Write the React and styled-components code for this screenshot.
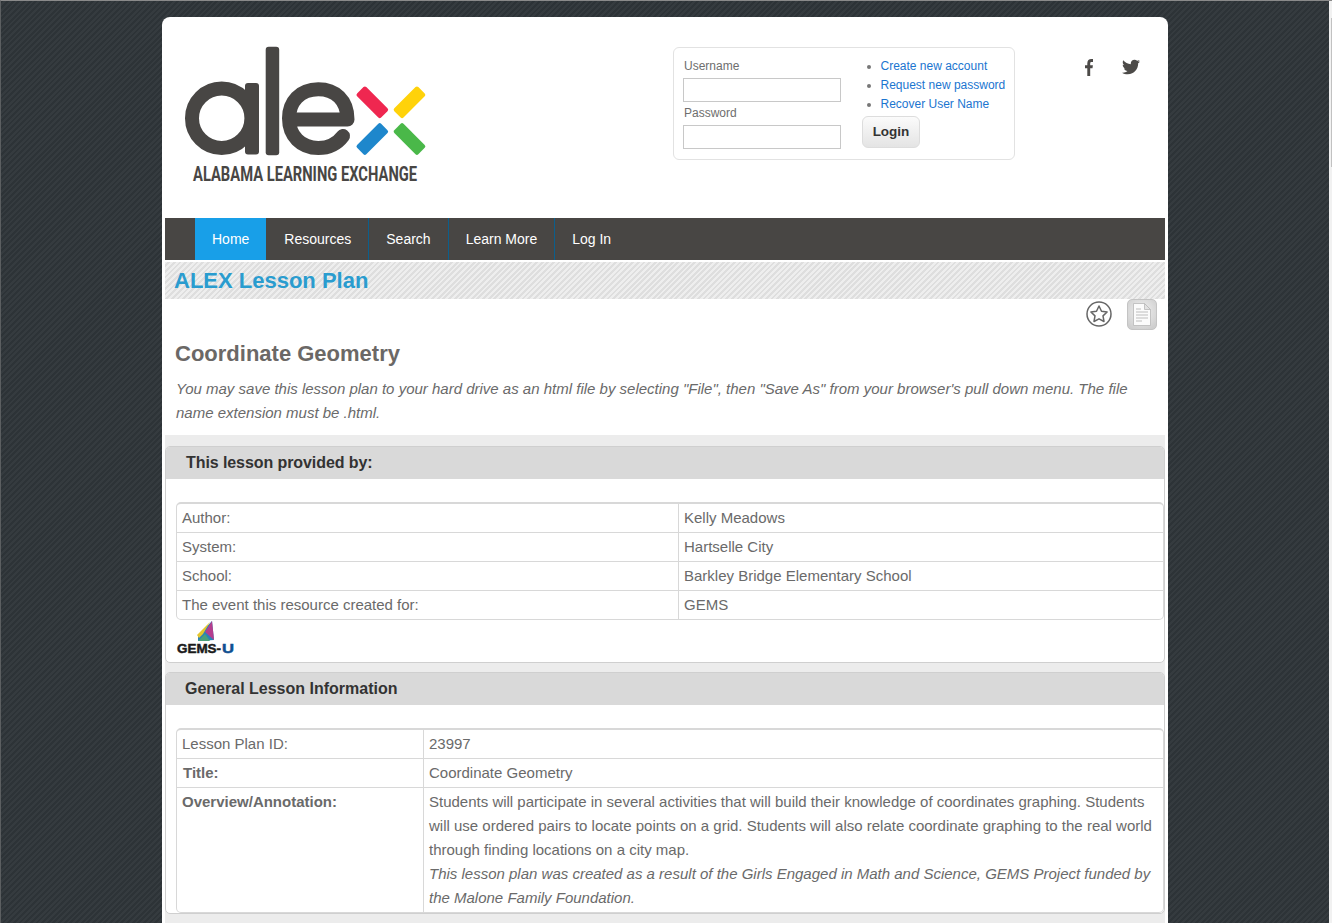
import React from 'react';
import styled, { createGlobalStyle } from 'styled-components';
import { FaTwitter } from 'react-icons/fa';

const Global = createGlobalStyle`
  html, body { margin: 0; padding: 0; height: 100%; overflow: hidden; }
  body { font-family: "Liberation Sans", Arial, sans-serif; color: #666; }
`;

const Backdrop = styled.div`
  position: relative;
  box-sizing: border-box;
  height: 923px;
  overflow: hidden;
  border-top: 1px solid #8a8a8a;
  border-left: 1px solid #5c5f61;
  padding: 16px 164px 0 161px;
  background: repeating-linear-gradient(135deg, #2d3337 0 2px, #353b3f 2px 4px);
`;
const ScrollTrack = styled.div`
  position: absolute;
  top: 0;
  right: 0;
  bottom: 0;
  width: 3px;
  background: #f1f1f1;
`;
const ScrollThumb = styled.div`
  position: absolute;
  top: 17px;
  right: 0;
  width: 1px;
  height: 149px;
  background: #c1c1c1;
`;
const Page = styled.div`
  background: #fff;
  border-radius: 8px 8px 0 0;
  padding: 0 3px;
  min-height: 1000px;
`;
const Header = styled.header`
  height: 201px;
  display: flex;
  align-items: flex-start;
`;
const LogoBox = styled.a`
  display: block;
  width: 250px;
  height: 150px;
  margin: 23px 0 0 15px;
`;
const LoginBox = styled.form`
  box-sizing: border-box;
  width: 342px;
  height: 113px;
  margin: 30px 0 0 243px;
  border: 1px solid #e2e2e2;
  border-radius: 6px;
  padding: 10px 9px;
  display: flex;
  font-size: 12px;
`;
const Fields = styled.div`
  width: 158px;
  margin-right: 21px;
`;
const FieldLabel = styled.label`
  display: block;
  height: 14px;
  line-height: 14px;
  margin: 1px 0 5px 1px;
  color: #6e6e6e;
`;
const TextInput = styled.input`
  box-sizing: border-box;
  display: block;
  width: 158px;
  height: 24px;
  border: 1px solid #c8c8c8;
  margin-bottom: 4px;
  background: #fff;
`;
const Side = styled.div`
  display: flex;
  flex-direction: column;
  align-items: flex-start;
`;
const LinkList = styled.ul`
  margin: -1px 0 0;
  padding: 0 0 0 18.5px;
  list-style: disc;
  color: #777;
  li { height: 19px; line-height: 19px; white-space: nowrap; }
`;
const TextLink = styled.a`
  color: #1b75d0;
`;
const LoginButton = styled.button`
  margin: 2px 0 0 0;
  width: 58px;
  height: 32px;
  border: 1px solid #ddd;
  border-radius: 6px;
  background: linear-gradient(#fbfbfb, #e4e4e4);
  font: bold 13.5px "Liberation Sans", sans-serif;
  color: #333;
  padding: 0 0 2px;
`;
const Social = styled.div`
  display: flex;
  align-items: center;
  gap: 29px;
  margin: 41px 0 0 70px;
  color: #4c4a48;
`;
const Nav = styled.nav`
  height: 42px;
  background: #484644;
  display: flex;
  padding-left: 30px;
  margin-bottom: 2px;
`;
const NavItem = styled.a`
  display: flex;
  align-items: center;
  padding: 0 17px;
  font-size: 14px;
  color: #fff;
  background: ${p => (p.$active ? '#189fe8' : 'transparent')};
  border-right: ${p => (p.$last || p.$active ? '0' : '1px solid #0c5f8c')};
  margin-left: ${p => (p.$first ? '1px' : '0')};
`;
const Band = styled.div`
  height: 37px;
  display: flex;
  align-items: center;
  padding-left: 9px;
  background: repeating-linear-gradient(135deg, #eeeeee 0 2px, #dedede 2px 4px);
`;
const BandTitle = styled.h2`
  margin: 0;
  font-size: 22px;
  font-weight: bold;
  color: #2a9ccf;
  line-height: 37px;
`;
const Tools = styled.div`
  height: 32px;
  display: flex;
  justify-content: flex-end;
  align-items: flex-start;
  gap: 15px;
  padding-right: 8px;
`;
const StarBadge = styled.span`
  display: block;
  width: 26px;
  height: 26px;
  margin-top: 2px;
`;
const DocButton = styled.span`
  box-sizing: border-box;
  width: 30px;
  height: 31px;
  border: 1px solid #c4c4c4;
  border-radius: 5px;
  background: radial-gradient(circle at 50% 40%, #f2f2f2, #cfcfcf 85%);
  display: flex;
  align-items: center;
  justify-content: center;
`;
const Intro = styled.div`
  padding: 10px 10px 10px;
`;
const PlanTitle = styled.h1`
  margin: 0 0 10px;
  font-size: 22px;
  line-height: 26px;
  font-weight: bold;
  color: #6b6866;
`;
const Note = styled.p`
  margin: 0 0 0 1px;
  font-size: 15px;
  line-height: 24px;
  font-style: italic;
  color: #6a6a6a;
`;
const Sections = styled.div`
  background: #ececec;
  padding: 11px 0 20px;
  display: flex;
  flex-direction: column;
  gap: 9px;
`;
const Panel = styled.section`
  background: #fff;
  border: 1px solid #cfcfcf;
  border-radius: 5px;
`;
const PanelHead = styled.h3`
  margin: 0;
  height: 32px;
  line-height: 31px;
  background: #d9d9d9;
  border-radius: 4px 4px 0 0;
  padding-left: ${p => p.$indent}px;
  font-size: 16px;
  font-weight: bold;
  color: #333;
  letter-spacing: ${p => p.$tight || 0}px;
`;
const PanelBody = styled.div`
  padding: 23px 0 0 10px;
`;
const InfoTable = styled.table`
  width: 988px;
  table-layout: fixed;
  border-collapse: separate;
  border-spacing: 0;
  border: 1px solid #d8d8d8;
  border-top-width: 2px;
  border-radius: 5px;
  font-size: 15px;
  line-height: 24px;
  color: #6a6a6a;
`;
const Cell = styled.td`
  padding: 2px 5px;
  vertical-align: top;
  border-bottom: ${p => (p.$end ? '0' : '1px solid #d8d8d8')};
  border-left: ${p => (p.$second ? '1px solid #d8d8d8' : '0')};
  font-weight: ${p => (p.$bold ? 'bold' : 'normal')};
  padding-left: ${p => (p.$nudge ? '6px' : '5px')};
`;
const GemsMark = styled.div`
  display: block;
  height: 42px;
`;

const Logo = () => (
  <svg width="250" height="150" viewBox="180 40 250 150">
    <g fill="none" stroke="#484644" strokeWidth="14">
      <circle cx="221.7" cy="118.3" r="29.7" />
      <path d="M293 119.5H347.5C347.5 100 335 89.3 318.3 89.3C300 89.3 289 102 289 118.3C289 136 301 148 318.3 148C329 148 337 144 343 136" strokeLinecap="round" strokeLinejoin="round" />
    </g>
    <rect x="245" y="83" width="14" height="71.5" rx="3" fill="#484644" />
    <rect x="265.7" y="46.7" width="13.5" height="108.5" rx="3" fill="#484644" />
    <rect x="355.3" y="95.8" width="34" height="13" rx="2" fill="#ef2750" transform="rotate(45 372.3 102.3)" />
    <rect x="392.5" y="95.8" width="34" height="13" rx="2" fill="#ffd20a" transform="rotate(-45 409.5 102.3)" />
    <rect x="355.3" y="132.5" width="34" height="13" rx="2" fill="#1e87cc" transform="rotate(-45 372.3 139)" />
    <rect x="392.5" y="132.5" width="34" height="13" rx="2" fill="#4ab849" transform="rotate(45 409.5 139)" />
    <text transform="translate(193 180.7) scale(.77 1)" fontFamily="Roboto, sans-serif" fontWeight="700" fontSize="19.7" fill="#484644" textLength="291" lengthAdjust="spacingAndGlyphs">ALABAMA LEARNING EXCHANGE</text>
  </svg>
);

const FacebookF = () => (
  <svg width="8" height="17" viewBox="0 0 8 17" fill="currentColor">
    <path d="M2.3 17V9.3H0V6.3h2.3V4.2C2.3 1.5 3.9 0 6.3 0H8v3H6.6C5.5 3 5.2 3.5 5.2 4.5v1.8h2.7l-.4 3H5.2V17z" />
  </svg>
);

const Star = () => (
  <svg width="26" height="26" viewBox="0 0 26 26" fill="none" stroke="#666" strokeWidth="1.5">
    <circle cx="13" cy="13" r="12" />
    <path d="M13 5l2.5 5.2 5.6.8-4.1 3.9 1 5.6-5-2.7-5 2.7 1-5.6-4.1-3.9 5.6-.8z" strokeLinejoin="round" />
  </svg>
);

const Doc = () => (
  <svg width="20" height="25" viewBox="0 0 20 25">
    <path d="M1.5 1.5h11l6 6v16h-17z" fill="#fbfbfb" stroke="#b8b8b8" strokeWidth=".8" />
    <path d="M12.5 1.5v6h6z" fill="#e2e2e2" stroke="#b8b8b8" strokeWidth=".8" />
    <path d="M4 7h5M4 10h12M4 13h12M4 16h12M4 19h6" stroke="#bdbdbd" strokeWidth="1" />
  </svg>
);

const Gems = () => (
  <svg width="60" height="36" viewBox="176 620 60 36">
    <polygon points="198,636 212,621 214,640 198,641" fill="#2a83b8" />
    <polygon points="197,635 210,622 203,634 199,638" fill="#e6c62c" />
    <polygon points="212,621 214,640 205,632" fill="#b53d8e" />
    <polygon points="198,641 205,634 210,641" fill="#4aa07a" />
    <text x="177" y="653" fontFamily="'Liberation Sans', sans-serif" fontWeight="bold" fontSize="13.5" textLength="44" lengthAdjust="spacingAndGlyphs" fill="#1b1b1b" stroke="#1b1b1b" strokeWidth=".5">GEMS-</text>
    <text x="222" y="653" fontFamily="'Liberation Sans', sans-serif" fontWeight="bold" fontSize="13.5" textLength="12" lengthAdjust="spacingAndGlyphs" fill="#0f4f91" stroke="#0f4f91" strokeWidth=".5">U</text>
  </svg>
);

const providerRows = [
  ['Author:', 'Kelly Meadows'],
  ['System:', 'Hartselle City'],
  ['School:', 'Barkley Bridge Elementary School'],
  ['The event this resource created for:', 'GEMS'],
];

export default function App() {
  return (
    <>
      <Global />
      <Backdrop>
        <Page>
          <Header>
            <LogoBox><Logo /></LogoBox>
            <LoginBox>
              <Fields>
                <FieldLabel>Username</FieldLabel>
                <TextInput />
                <FieldLabel>Password</FieldLabel>
                <TextInput />
              </Fields>
              <Side>
                <LinkList>
                  <li><TextLink>Create new account</TextLink></li>
                  <li><TextLink>Request new password</TextLink></li>
                  <li><TextLink>Recover User Name</TextLink></li>
                </LinkList>
                <LoginButton type="button">Login</LoginButton>
              </Side>
            </LoginBox>
            <Social>
              <FacebookF />
              <FaTwitter size={18} />
            </Social>
          </Header>
          <Nav>
            <NavItem $active>Home</NavItem>
            <NavItem $first>Resources</NavItem>
            <NavItem>Search</NavItem>
            <NavItem>Learn More</NavItem>
            <NavItem $last>Log In</NavItem>
          </Nav>
          <Band><BandTitle>ALEX Lesson Plan</BandTitle></Band>
          <Tools>
            <StarBadge><Star /></StarBadge>
            <DocButton><Doc /></DocButton>
          </Tools>
          <Intro>
            <PlanTitle>Coordinate Geometry</PlanTitle>
            <Note>You may save this lesson plan to your hard drive as an html file by selecting "File", then "Save As" from your browser's pull down menu. The file name extension must be .html.</Note>
          </Intro>
          <Sections>
            <Panel>
              <PanelHead $indent={20} $tight={-0.08}>This lesson provided by:</PanelHead>
              <PanelBody>
                <InfoTable>
                  <colgroup><col width="501" /><col /></colgroup>
                  <tbody>
                    {providerRows.map(([k, v], i) => (
                      <tr key={k}>
                        <Cell $end={i === 3}>{k}</Cell>
                        <Cell $second $end={i === 3}>{v}</Cell>
                      </tr>
                    ))}
                  </tbody>
                </InfoTable>
                <GemsMark><Gems /></GemsMark>
              </PanelBody>
            </Panel>
            <Panel>
              <PanelHead $indent={19}>General Lesson Information</PanelHead>
              <PanelBody>
                <InfoTable>
                  <colgroup><col width="246" /><col /></colgroup>
                  <tbody>
                    <tr><Cell>Lesson Plan ID:</Cell><Cell $second>23997</Cell></tr>
                    <tr><Cell $bold $nudge>Title:</Cell><Cell $second>Coordinate Geometry</Cell></tr>
                    <tr>
                      <Cell $bold $end>Overview/Annotation:</Cell>
                      <Cell $second $end>
                        Students will participate in several activities that will build their knowledge of coordinates graphing. Students will use ordered pairs to locate points on a grid. Students will also relate coordinate graphing to the real world through finding locations on a city map.
                        <br />
                        <em>This lesson plan was created as a result of the Girls Engaged in Math and Science, GEMS Project funded by the Malone Family Foundation.</em>
                      </Cell>
                    </tr>
                  </tbody>
                </InfoTable>
              </PanelBody>
            </Panel>
          </Sections>
        </Page>
        <ScrollTrack><ScrollThumb /></ScrollTrack>
      </Backdrop>
    </>
  );
}
